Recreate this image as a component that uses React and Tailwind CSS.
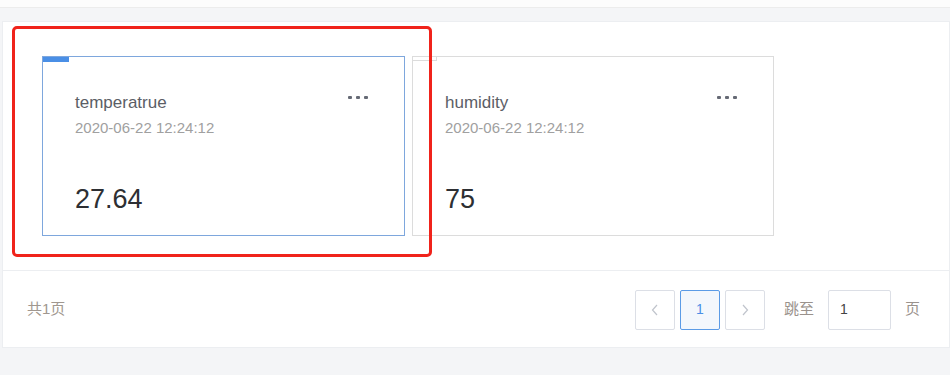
import React from "react";

function Dots() {
  return (
    <div className="flex gap-[4px] pt-[3px]">
      <span className="w-[4px] h-[3px] bg-[#666a75] rounded-[1px]" />
      <span className="w-[4px] h-[3px] bg-[#666a75] rounded-[1px]" />
      <span className="w-[4px] h-[3px] bg-[#666a75] rounded-[1px]" />
    </div>
  );
}

function Card({ title, time, value, active }) {
  return (
    <div
      className={
        "relative h-[180px] border bg-white pl-[32px] pr-[36px] pt-[36px] flex flex-col " +
        (active ? "w-[363px] border-[#7ea7dd]" : "w-[362px] border-[#dcdcdc]")
      }
    >
      {active ? (
        <div className="absolute left-0 top-0 w-[26px] h-[5px] bg-[#4a8fe6]" />
      ) : (
        <div className="absolute left-0 top-0 w-[24px] h-[4px] border-r border-b border-[#dcdcdc]" />
      )}
      <div className="flex justify-between items-start">
        <div className="text-[17px] leading-[20px] text-[#5b5e66]">{title}</div>
        <Dots />
      </div>
      <div className="text-[15px] leading-[18px] text-[#a0a0a0] mt-[6px]">{time}</div>
      <div className="text-[27px] leading-[32px] text-[#2d2f33] mt-[46px]">{value}</div>
    </div>
  );
}

export default function App() {
  return (
    <div
      className="w-[950px] h-[375px] bg-[#f4f5f7] relative overflow-hidden"
      style={{ fontFamily: '"Liberation Sans", "Noto Sans CJK SC", sans-serif' }}
    >
      <div className="h-[8px] bg-[#fcfcfc] border-b border-[#ececec]" />
      <div className="h-[13px] bg-[#f4f5f7]" />
      <div className="ml-[2px] bg-white border border-[#eceef1] h-[327px] flex flex-col">
        <div className="h-[249px] border-b border-[#eceef1] flex gap-[7px] pl-[39px] pt-[34px]">
          <Card title="temperatrue" time="2020-06-22 12:24:12" value="27.64" active />
          <Card title="humidity" time="2020-06-22 12:24:12" value="75" />
        </div>
        <div className="flex-1 flex items-center justify-between pl-[24px] pr-[29px] pt-[1px]">
          <div className="text-[15px] text-[#a0978f]">共1页</div>
          <div className="flex items-center">
            <div className="w-[40px] h-[40px] border border-[#dcdfe6] rounded-[2px] flex items-center justify-center">
              <svg width="8" height="12" viewBox="0 0 8 12" fill="none">
                <path d="M6 1 L1.5 6 L6 11" stroke="#c0c4cc" strokeWidth="1.2" />
              </svg>
            </div>
            <div className="ml-[5px] w-[40px] h-[40px] border border-[#5b9be6] bg-[#f3f7fc] rounded-[2px] flex items-center justify-center text-[14px] text-[#4a8fe6]">
              1
            </div>
            <div className="ml-[5px] w-[40px] h-[40px] border border-[#dcdfe6] rounded-[2px] flex items-center justify-center">
              <svg width="8" height="12" viewBox="0 0 8 12" fill="none">
                <path d="M2 1 L6.5 6 L2 11" stroke="#c0c4cc" strokeWidth="1.2" />
              </svg>
            </div>
            <div className="ml-[19px] text-[15px] text-[#9a928c]">跳至</div>
            <div className="ml-[14px] w-[63px] h-[40px] border border-[#dcdfe6] rounded-[2px] flex items-center pl-[11px] text-[14px] text-[#444]">
              1
            </div>
            <div className="ml-[14px] text-[15px] text-[#9a928c]">页</div>
          </div>
        </div>
      </div>
      <div className="absolute left-[12px] top-[26px] w-[420px] h-[231px] border-[3px] border-[#f0231b] rounded-[5px] pointer-events-none" />
    </div>
  );
}
